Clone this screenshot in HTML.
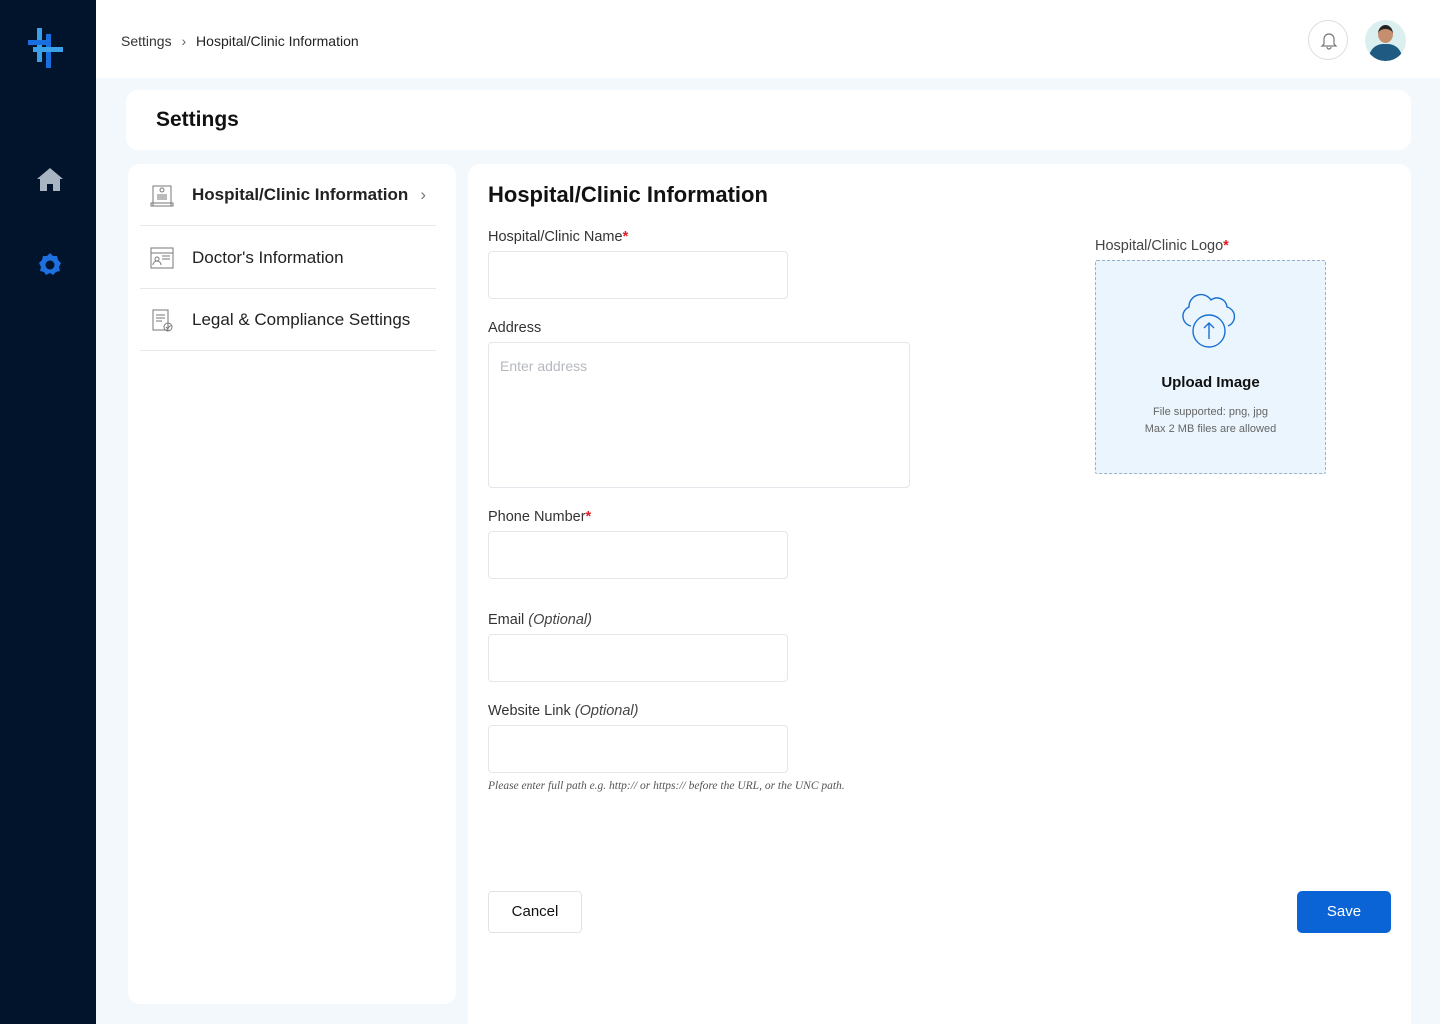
<!DOCTYPE html>
<html><head><meta charset="utf-8"><style>
*{box-sizing:border-box;margin:0;padding:0}
html,body{width:1440px;height:1024px;overflow:hidden}
body{background:#f3f8fc;font-family:"Liberation Sans",sans-serif;color:#111;position:relative}
.sb{position:absolute;left:0;top:0;width:96px;height:1024px;background:#02142b}
.hd{position:absolute;left:96px;top:0;width:1344px;height:78px;background:#fff}
.abs{position:absolute}
.card{position:absolute;background:#fff;border-radius:12px}
.lbl{position:absolute;left:488px;font-size:14.5px;color:#333}
.lbl i{color:#444}
.req{color:#e01b24;font-weight:bold}
.inp{position:absolute;left:488px;width:300px;height:48px;border:1px solid #e3e6ea;border-radius:4px;background:#fff}
.menu{position:absolute;left:140px;width:296px;height:62px;border-bottom:1px solid #e6e8eb;display:flex;align-items:center}
.menu span{margin-left:52px;font-size:17px;color:#222}
</style></head><body>
<div class="sb">
<svg class="abs" style="left:26px;top:26px" width="40" height="44" viewBox="0 0 40 44">
<rect x="11" y="2" width="5" height="34" fill="#3aa0ea"/><rect x="20" y="8" width="5" height="34" fill="#1a6fe0"/>
<rect x="2" y="14" width="20" height="5" fill="#1a6fe0"/><rect x="7" y="21" width="30" height="5" fill="#3aa0ea"/>
</svg>
<svg class="abs" style="left:36px;top:166px" width="28" height="26" viewBox="0 0 28 26"><path d="M14 2 L1 13 L4 13 L4 25 L11 25 L11 18 L17 18 L17 25 L24 25 L24 13 L27 13 Z" fill="#a9b4c2"/></svg>
<svg class="abs" style="left:37px;top:252px" width="26" height="26" viewBox="0 0 26 26"><path d="M13 1 l3 3 h4 l1 4 l3 3 -2 4 1 4 -4 1 -3 3 -3-2 -4 2 -2-3 -4-1 1-4 -2-4 3-3 1-4 h4z" fill="#1e6fe0"/><circle cx="13" cy="13" r="4.5" fill="#02142b"/></svg>
</div>
<div class="hd">
<div class="abs" style="left:25px;top:33px;font-size:14px;color:#333">Settings <span style="margin:0 6px;color:#666">›</span> <span style="color:#222">Hospital/Clinic Information</span></div>
<div class="abs" style="left:1212px;top:20px;width:40px;height:40px;border:1px solid #ddd;border-radius:50%"><svg style="position:absolute;left:11px;top:10px" width="18" height="20" viewBox="0 0 18 20"><path d="M4 13 V8 a5 5 0 0 1 10 0 V13 l2 2 H2 Z M7 16 a2 2 0 0 0 4 0" fill="none" stroke="#777" stroke-width="1.2"/></svg></div>
<div class="abs" style="left:1269px;top:20px;width:41px;height:41px;border-radius:50%;background:#dceff0;overflow:hidden"><div class="abs" style="left:13px;top:5px;width:15px;height:18px;border-radius:50%;background:#c58e6e;border-top:4px solid #222"></div><div class="abs" style="left:4px;top:24px;width:33px;height:22px;border-radius:14px 14px 0 0;background:#1f5a82"></div></div>
</div>
<div class="card" style="left:126px;top:90px;width:1285px;height:60px"><div class="abs" style="left:30px;top:18px;font-size:21px;font-weight:bold;color:#111">Settings</div></div>
<div class="card" style="left:128px;top:164px;width:328px;height:840px"></div>
<div class="menu" style="top:164px"><svg class="abs" style="left:10px;top:20px" width="24" height="24" viewBox="0 0 24 24" fill="none" stroke="#777" stroke-width="1"><rect x="3" y="2" width="18" height="20"/><rect x="1" y="19" width="22" height="3"/><circle cx="12" cy="6" r="2"/><path d="M7 11h10M7 13h10M7 15h10"/></svg><span style="font-weight:bold">Hospital/Clinic Information</span><span style="margin-left:auto;margin-right:10px;color:#777">›</span></div>
<div class="menu" style="top:227px"><svg class="abs" style="left:10px;top:20px" width="24" height="22" viewBox="0 0 24 22" fill="none" stroke="#777" stroke-width="1"><rect x="1" y="1" width="22" height="20"/><path d="M1 6h22M12 9h8M12 12h8"/><circle cx="7" cy="12" r="2"/><path d="M3 18 a4 4 0 0 1 8 0"/></svg><span>Doctor's Information</span></div>
<div class="menu" style="top:289px"><svg class="abs" style="left:12px;top:20px" width="22" height="24" viewBox="0 0 22 24" fill="none" stroke="#777" stroke-width="1"><rect x="1" y="1" width="15" height="20"/><path d="M4 6h9M4 9h9M4 12h6"/><circle cx="16" cy="18" r="4"/><path d="M14 18l1.5 1.5 3-3"/></svg><span>Legal &amp; Compliance Settings</span></div>
<div class="card" style="left:468px;top:164px;width:943px;height:860px;border-radius:12px 12px 0 0"></div>
<div class="abs" style="left:488px;top:182px;font-size:22px;font-weight:bold;color:#111">Hospital/Clinic Information</div>
<div class="lbl" style="top:229px">Hospital/Clinic Name<span class="req">*</span></div>
<div class="inp" style="top:251px"></div>
<div class="lbl" style="top:320px">Address</div>
<div class="inp" style="top:342px;width:422px;height:146px"><div class="abs" style="left:11px;top:15px;font-size:14px;color:#b5b9bf">Enter address</div></div>
<div class="lbl" style="top:509px">Phone Number<span class="req">*</span></div>
<div class="inp" style="top:531px"></div>
<div class="lbl" style="top:612px">Email <i>(Optional)</i></div>
<div class="inp" style="top:634px"></div>
<div class="lbl" style="top:703px">Website Link <i>(Optional)</i></div>
<div class="inp" style="top:725px"></div>
<div class="abs" style="left:488px;top:780px;font-size:11.5px;font-style:italic;color:#555;font-family:'Liberation Serif',serif">Please enter full path e.g. http:// or https:// before the URL, or the UNC path.</div>
<div class="abs" style="left:1095px;top:238px;font-size:14.5px;color:#444">Hospital/Clinic Logo<span class="req">*</span></div>
<div class="abs" style="left:1095px;top:260px;width:231px;height:214px;border:1px dashed #9ab0c8;background:#eaf5fd;border-radius:2px">
<svg class="abs" style="left:81px;top:32px" width="66" height="58" viewBox="0 0 66 58" fill="none" stroke="#1a6fd1" stroke-width="1.4"><path d="M14 33 a10 10 0 0 1 -2 -19 a12 12 0 0 1 22 -7 a10 10 0 0 1 16 7 a10 10 0 0 1 1 19"/><circle cx="32" cy="38" r="16" fill="#eaf5fd"/><path d="M32 46 V31 M27 35 L32 30 L37 35"/></svg>
<div class="abs" style="left:0;width:229px;top:113px;text-align:center;font-size:15px;font-weight:bold;color:#111">Upload Image</div>
<div class="abs" style="left:0;width:229px;top:143px;text-align:center;font-size:11px;color:#666;line-height:17px">File supported: png, jpg<br>Max 2 MB files are allowed</div>
</div>
<div class="abs" style="left:488px;top:891px;width:94px;height:42px;border:1px solid #e0e3e7;border-radius:4px;background:#fff;text-align:center;line-height:40px;font-size:15px;color:#111">Cancel</div>
<div class="abs" style="left:1297px;top:891px;width:94px;height:42px;border-radius:5px;background:#0a64d6;text-align:center;line-height:42px;font-size:15px;color:#fff">Save</div>
</body></html>
